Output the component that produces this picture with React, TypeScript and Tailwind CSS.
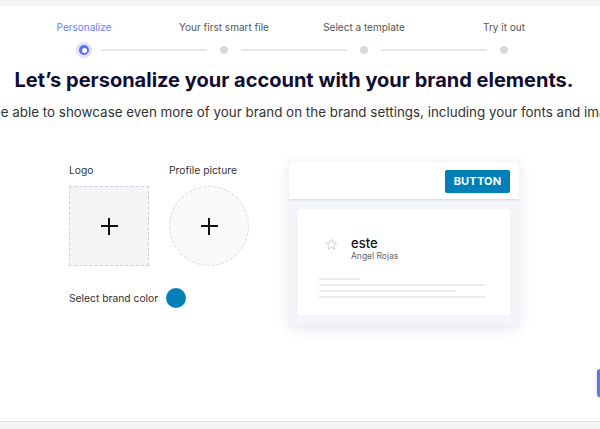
import React from "react";

const steps = ["Personalize", "Your first smart file", "Select a template", "Try it out"];

function Star() {
  return (
    <svg width="13" height="13" viewBox="0 0 24 24" fill="none" stroke="#c8c8c8" strokeWidth="1.6" strokeLinejoin="round">
      <path d="M12 2.5l2.9 6.1 6.6.8-4.9 4.6 1.3 6.6L12 17.3l-5.9 3.3 1.3-6.6-4.9-4.6 6.6-.8z" />
    </svg>
  );
}

function Plus() {
  return (
    <div className="relative w-[17px] h-[17px]">
      <div className="absolute left-0 right-0 top-[7.5px] h-[2px] bg-[#111]" />
      <div className="absolute top-0 bottom-0 left-[7.5px] w-[2px] bg-[#111]" />
    </div>
  );
}

export default function App() {
  return (
    <div
      className="w-[600px] h-[429px] overflow-hidden flex flex-col bg-white"
      style={{ fontFamily: "Inter, 'Noto Sans', sans-serif" }}
    >
      <div className="h-[6px] bg-[#f5f5f7] shrink-0" />
      <div className="flex-1 flex flex-col w-[588px]">
        {/* Stepper labels */}
        <div className="mt-[15px] flex justify-center">
          {steps.map((s, i) => (
            <div
              key={s}
              className={`w-[140px] text-center text-[10px] leading-[12px] ${i === 0 ? "text-[#6f7cf6]" : "text-[#555]"}`}
            >
              {s}
            </div>
          ))}
        </div>
        {/* Dots */}
        <div className="mt-[9px] h-[16px] flex items-center justify-center">
          <div className="w-[34px] flex justify-center">
            <div className="w-[16px] h-[16px] rounded-full bg-[#dfe3fd] flex items-center justify-center">
              <div className="w-[10px] h-[10px] rounded-full bg-[#5b73f3] flex items-center justify-center">
                <div className="w-[5px] h-[5px] rounded-full bg-white" />
              </div>
            </div>
          </div>
          {[1, 2, 3].map((i) => (
            <React.Fragment key={i}>
              <div className="w-[106px] h-[2px] bg-[#e8e8ea]" />
              <div className="w-[34px] flex justify-center">
                <div className="w-[8px] h-[8px] rounded-full bg-[#d9d9dc]" />
              </div>
            </React.Fragment>
          ))}
        </div>
        {/* Heading */}
        <h1 className="mt-[8px] text-center text-[20px] leading-[28px] font-bold text-[#100d30] whitespace-nowrap">
          Let’s personalize your account with your brand elements.
        </h1>
        <div className="mt-[9px] flex justify-center">
          <p className="text-[13.4px] leading-[18px] text-[#333] whitespace-nowrap">
            You’ll be able to showcase even more of your brand on the brand settings, including your fonts and images.
          </p>
        </div>
        {/* Body */}
        <div className="mt-[41px] flex">
          <div className="ml-[69px] mt-[1px] flex flex-col">
            <div className="flex gap-[20px]">
              <div className="flex flex-col">
                <div className="text-[10.3px] leading-[14px] text-[#333]">Logo</div>
                <div className="mt-[9px] w-[80px] h-[80px] border border-dashed border-[#d2d2d6] bg-[#f4f5f7] flex items-center justify-center">
                  <Plus />
                </div>
              </div>
              <div className="flex flex-col">
                <div className="text-[10.3px] leading-[14px] text-[#333]">Profile picture</div>
                <div className="mt-[9px] w-[80px] h-[80px] rounded-full border border-dashed border-[#d8d8dc] bg-[#f9f9f9] flex items-center justify-center">
                  <Plus />
                </div>
              </div>
            </div>
            <div className="mt-[22px] flex items-center h-[20px]">
              <span className="text-[10.3px] leading-[14px] text-[#333]">Select brand color</span>
              <div className="ml-[8px] w-[20px] h-[20px] rounded-full bg-[#0180b8]" />
            </div>
          </div>
          <div className="ml-[40px] w-[230px] h-[163px] rounded-[4px] bg-[#f4f5f9] shadow-[0_3px_14px_rgba(40,50,110,0.13)] flex flex-col overflow-hidden">
            <div className="h-[37px] bg-white flex justify-end items-start pt-[8px] pr-[9px] shadow-[0_1px_2px_rgba(0,0,0,0.12)] relative">
              <div className="w-[65px] h-[23px] rounded-[2px] bg-[#0180b8] text-white text-[11px] font-bold flex items-center justify-center tracking-[0.2px]">
                BUTTON
              </div>
            </div>
            <div className="mt-[10px] mx-[9px] h-[106px] bg-white flex flex-col">
              <div className="mt-[27px] ml-[27px] flex items-start">
                <div className="mt-[2px]">
                  <Star />
                </div>
                <div className="ml-[13px] flex flex-col">
                  <div className="text-[13px] leading-[14px] font-medium text-[#111]">este</div>
                  <div className="mt-[1px] text-[8.5px] leading-[11px] text-[#666]">Angel Rojas</div>
                </div>
              </div>
              <div className="mt-[16px] ml-[21px] flex flex-col gap-[4px]">
                <div className="w-[41px] h-[2px] bg-[#ededed]" />
                <div className="w-[167px] h-[2px] bg-[#ededed]" />
                <div className="w-[137px] h-[2px] bg-[#ededed]" />
                <div className="w-[167px] h-[2px] bg-[#ededed]" />
              </div>
            </div>
          </div>
        </div>
        <div className="mt-[44px] flex justify-end w-[600px]">
          <div className="w-[80px] h-[28px] -mr-[77px] rounded-[3px] bg-[#5a78f4] shadow-[0_1px_3px_rgba(0,0,0,0.2)]" />
        </div>
      </div>
      <div className="h-[1px] bg-[#dcdce3] shrink-0" />
      <div className="h-[7px] bg-[#f5f5f7] shrink-0" />
    </div>
  );
}
